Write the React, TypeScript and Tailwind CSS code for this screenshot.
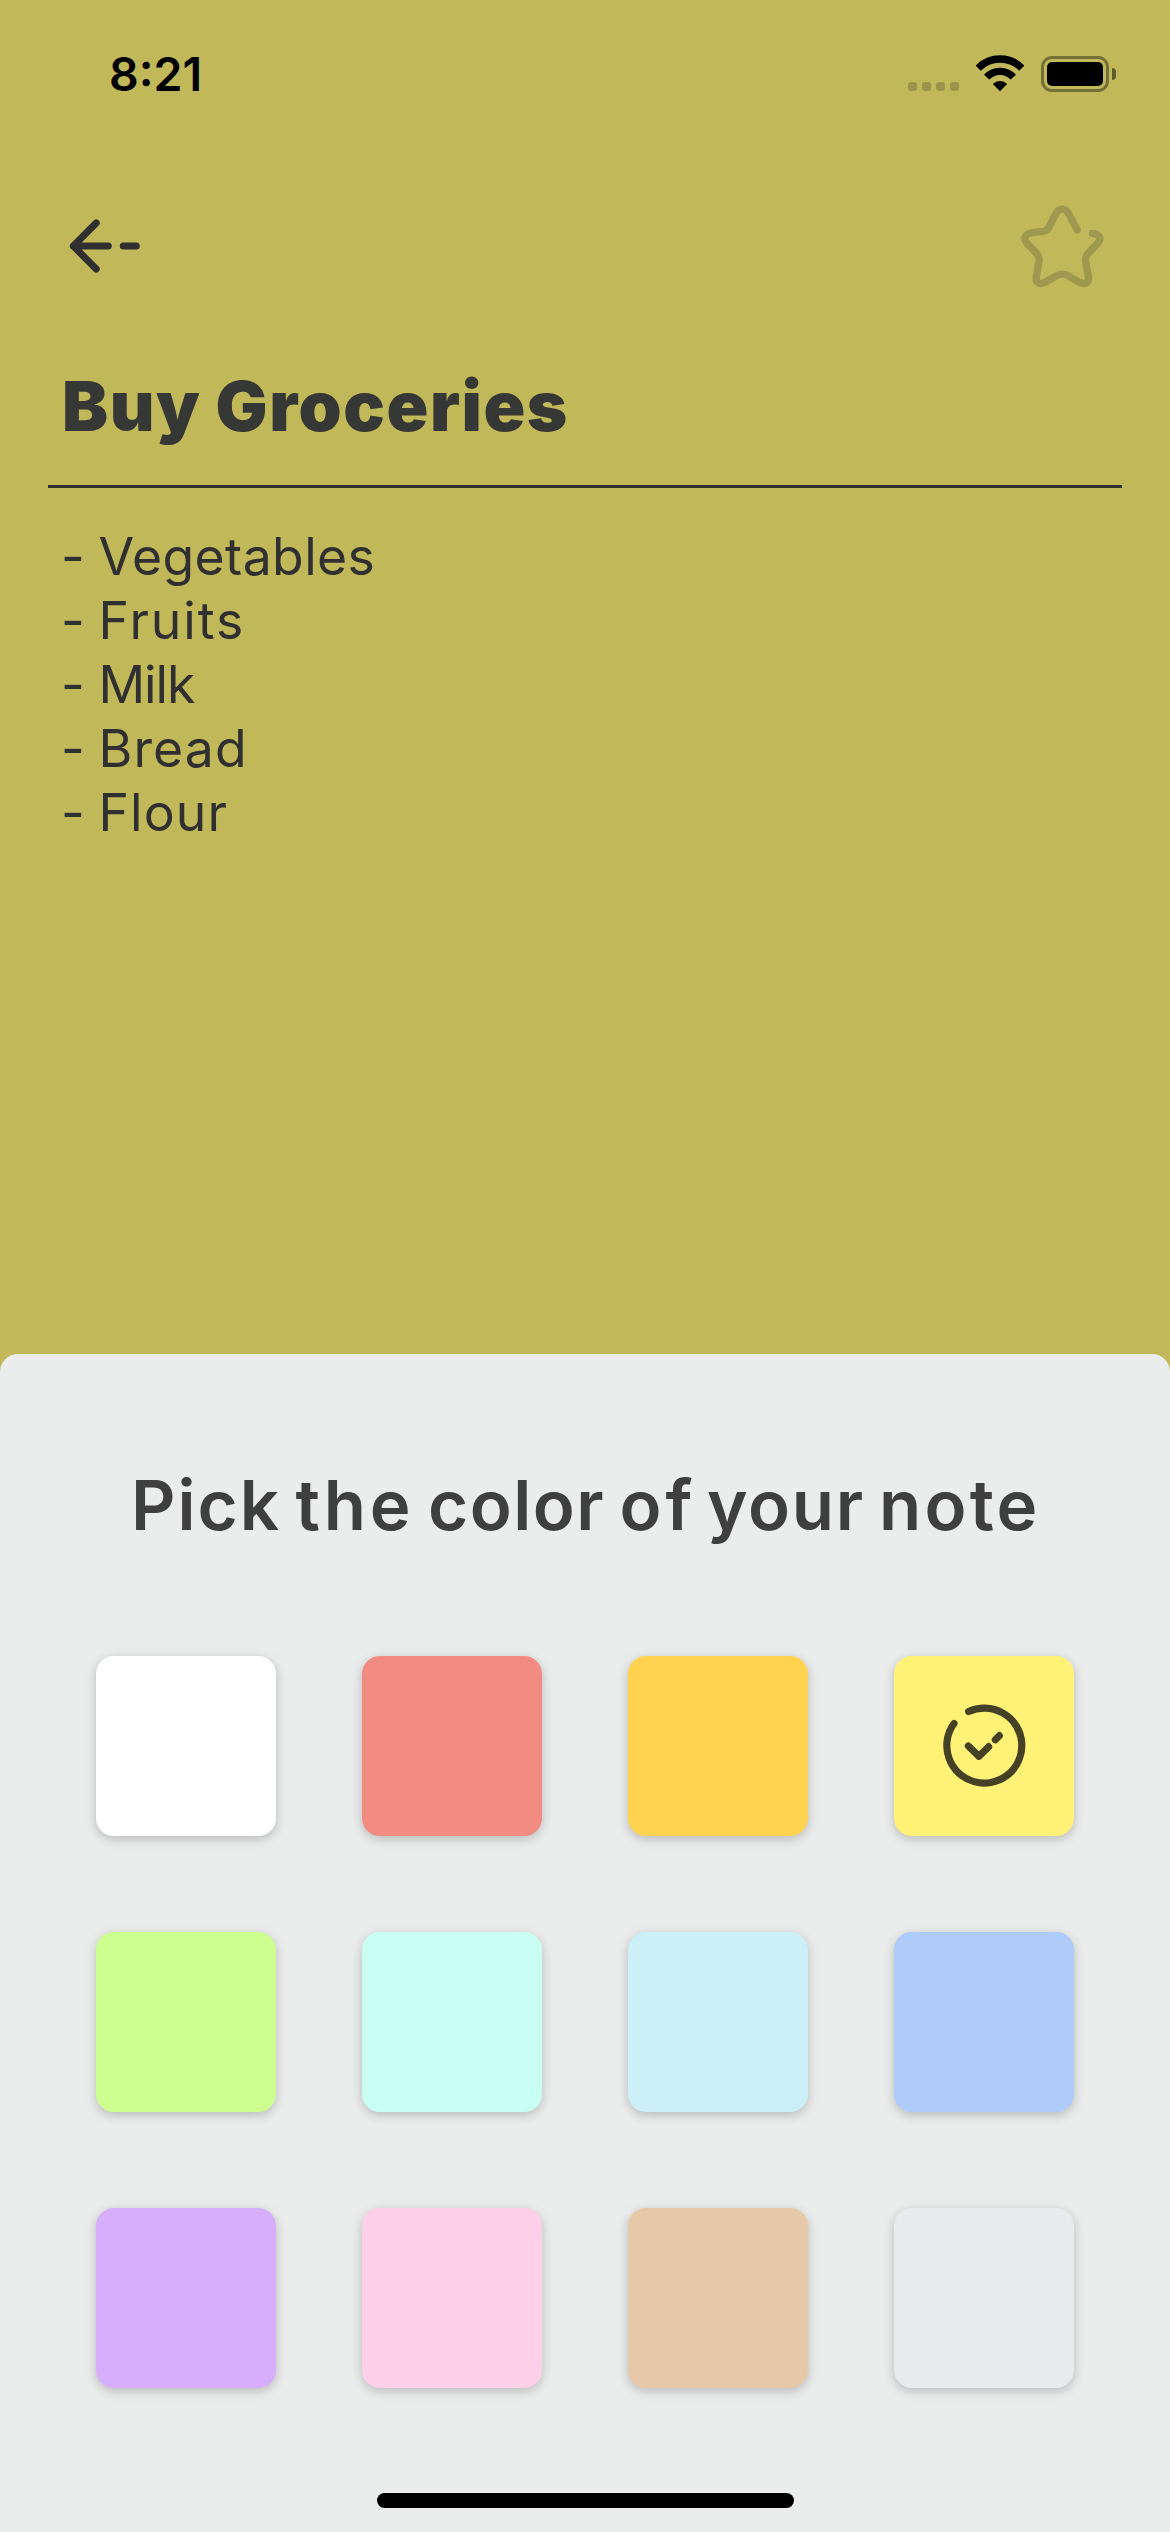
import React, { Fragment } from 'react';

const noteLines = [
  { text: 'Vegetables', tracking: 'tracking-[0.4px]' },
  { text: 'Fruits', tracking: 'tracking-[1.9px]' },
  { text: 'Milk', tracking: 'tracking-[-1.1px]' },
  { text: 'Bread', tracking: 'tracking-[1.1px]' },
  { text: 'Flour', tracking: 'tracking-[1.1px]' },
];

const headingWords = [
  { text: 'Pick', style: 'w-[164.5px] tracking-[2px]' },
  { text: 'the', style: 'w-[132.5px] tracking-[3.8px]' },
  { text: 'color', style: 'w-[191.5px] tracking-[1.5px]' },
  { text: 'of', style: 'w-[87.5px] tracking-[4px]' },
  { text: 'your', style: 'w-[172px] tracking-[1.7px]' },
  { text: 'note', style: 'tracking-[3.2px]' },
];

const swatches = [
  'bg-white',
  'bg-[#f28b82]',
  'bg-[#ffd34f]',
  'bg-[#fff276]',
  'bg-[#ccff90]',
  'bg-[#c9fff3]',
  'bg-[#cbf0f8]',
  'bg-[#aecbfa]',
  'bg-[#d7aefb]',
  'bg-[#fdcfe8]',
  'bg-[#e6c9a8]',
  'bg-[#e8eaed]',
];

function StatusBar() {
  return (
    <div className="flex h-[104px] items-start justify-between pt-11 pr-[54px] pl-[109px]">
      <span className="text-[46.4px] leading-[60px] font-semibold text-black">8:21</span>
      <div className="flex items-start pt-[11px]">
        <div className="mt-[27px] flex gap-[5px]">
          {[0, 1, 2, 3].map((dot) => (
            <span key={dot} className="size-[9px] rounded-[3px] bg-[#9b944a]" />
          ))}
        </div>
        <svg className="ml-[17px] h-[37px] w-12" viewBox="285 75 144 111" fill="none" stroke="#000">
          <path d="M291.500 114.500A91.800 91.800 0 0 1 422.500 114.500" strokeWidth="22" />
          <path d="M317 141.500A54.500 54.500 0 0 1 397 141.500" strokeWidth="21.500" />
          <path d="M357 184L335.500 162A31 31 0 0 1 378.500 162Z" fill="#000" stroke="none" />
        </svg>
        <div className="mt-px ml-[17px] flex h-9 w-[68px] rounded-[11px] border-[3px] border-[#757037] p-[3px]">
          <div className="flex-1 rounded-[5px] bg-black" />
        </div>
        <div className="mt-[13px] ml-[3px] h-3 w-1 rounded-r-full bg-[#5f5b2d]" />
      </div>
    </div>
  );
}

function BackIcon() {
  return (
    <svg className="h-[60px] w-[76px]" viewBox="66 216 76 60" fill="none" stroke="#303030" strokeWidth="7" strokeLinecap="round" strokeLinejoin="round">
      <path d="M96.200 223L73.300 246L96.200 269M73.300 246H108.300M123.300 246H136.300" />
    </svg>
  );
}

function StarIcon() {
  return (
    <svg className="h-[90px] w-[90px]" viewBox="80 62 270 270" fill="none" stroke="#9f984f" strokeWidth="22" strokeLinecap="round" strokeLinejoin="round">
      <path d="M261 149L234 99C224 82 207 82 197 99L178 136C173 146 170 151 158 153L126 157C103 161 98 175 110 189L136 216C146 226 148 232 146 244L138 288C135 307 147 315 164 306L197 287C210 279 221 279 234 287L267 306C284 315 297 307 294 288L286 244C284 232 286 226 296 216L322 189C335 174 328 161 306 159" />
    </svg>
  );
}

function CheckIcon() {
  return (
    <svg className="size-[90px]" viewBox="117 183 270 270" fill="none" stroke="#454124" strokeWidth="21.500" strokeLinecap="round" strokeLinejoin="round">
      <path d="M206 214.500A112.500 112.500 0 1 1 162 250.500" />
      <path d="M205 318L237 349L266 320M286 299L298 287" />
    </svg>
  );
}

export default function App() {
  return (
    <main className="flex h-[2532px] w-[1170px] flex-col overflow-hidden bg-[#c1b85a] font-['Inter',sans-serif]">
      <StatusBar />
      <section className="flex h-[1250px] shrink-0 flex-col">
        <header className="flex items-start justify-between pt-[97px] pr-[63px] pl-[66px]">
          <button className="mt-[15px]" aria-label="Back">
            <BackIcon />
          </button>
          <button aria-label="Favorite">
            <StarIcon />
          </button>
        </header>
        <div className="mx-12 mt-[75px] h-[122px] border-b-[3px] border-[#303030]">
          <h1 className="flex pl-[14px] text-[69px] leading-[80px] font-black tracking-[1.6px] text-[#353834]">
            <span className="w-[153.5px]">Buy</span> <span>Groceries</span>
          </h1>
        </div>
        <ul className="mt-9 pl-[61px] text-[51.7px] leading-[64px] font-normal text-[#303030]">
          {noteLines.map((line) => (
            <li key={line.text} className="flex">
              <span className="w-[37.5px]">-</span> <span className={line.tracking}>{line.text}</span>
            </li>
          ))}
        </ul>
      </section>
      <section className="flex h-[1178px] shrink-0 flex-col rounded-t-[18px] bg-[#ebedec] pt-[111px]">
        <h2 className="flex pl-[131px] text-[69px] leading-[80px] font-semibold text-[#3f3f3f]">
          {headingWords.map((word) => (
            <Fragment key={word.text}>
              <span className={word.style}>{word.text}</span>{' '}
            </Fragment>
          ))}
        </h2>
        <div className="mx-24 mt-[111px] grid grid-cols-4 gap-x-[86px] gap-y-24">
          {swatches.map((color, index) => (
            <button
              key={color}
              aria-label={`Color ${index + 1}`}
              className={`flex size-[180px] items-center justify-center rounded-[18px] shadow-[0_3px_11px_rgba(0,0,0,0.22)] ${color}`}
            >
              {index === 3 && <CheckIcon />}
            </button>
          ))}
        </div>
        <div className="mx-auto mt-[105px] h-[15px] w-[417px] rounded-full bg-black" />
      </section>
    </main>
  );
}
